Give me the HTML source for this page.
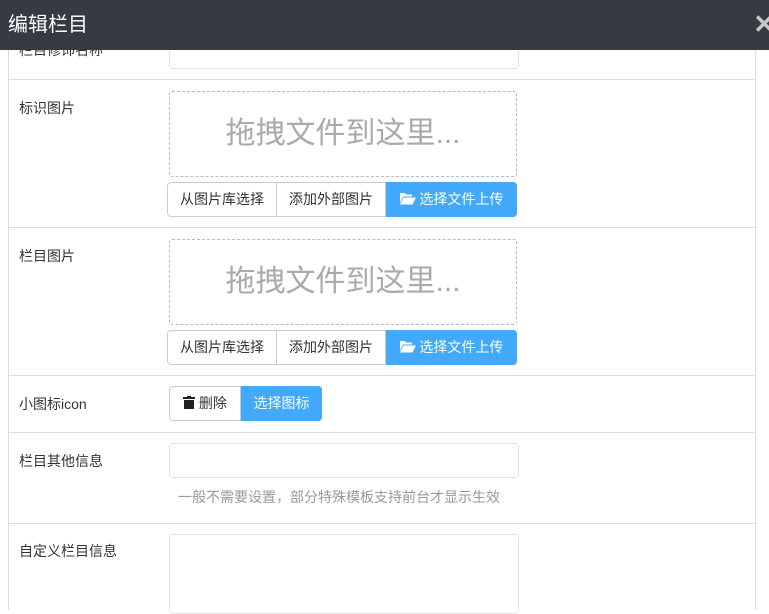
<!DOCTYPE html>
<html><head><meta charset="utf-8"><style>
*{box-sizing:border-box;margin:0;padding:0}
body{width:769px;height:597px;overflow:hidden;background:#fff;font-family:"Liberation Sans","Noto Sans CJK SC",sans-serif;font-size:14px;color:#333;position:relative}
.hd{position:absolute;left:0;top:0;width:769px;height:50px;background:#353a43;color:#fff;font-size:20px;line-height:50px;padding-left:8px}
.x{position:absolute;right:-6px;top:9px;color:#c8c8c8;font-size:26px;font-weight:bold;line-height:30px}
.panel{position:absolute;left:8px;top:50px;width:748px;height:560px;border-left:1px solid #ddd;border-right:1px solid #ddd}
.line{position:absolute;left:8px;width:748px;height:1px;background:#ddd}
.lb{position:absolute;left:19px;font-size:14px;color:#333}
.inp{position:absolute;left:169px;width:350px;border:1px solid #e3e3e3;border-radius:4px;background:#fff}
.dz{position:absolute;left:169px;width:348px;height:86px;border:1px dashed #bbb;border-radius:3px;text-align:center;line-height:84px;font-size:30px;color:#aaa}
.bg{position:absolute;height:35px;display:flex;border-radius:4px;overflow:hidden}
.b{height:35px;line-height:33px;text-align:center;font-size:14px;border:1px solid #ccc;color:#333;background:#fff}
.bp{background:#42a9fc;border-color:#42a9fc;color:#fff}
.hint{position:absolute;left:178px;top:487px;font-size:14px;color:#999}
</style></head><body>
<div class="panel"></div>
<div class="lb" style="top:40px">栏目修饰名称</div>
<div class="inp" style="top:36px;height:33px"></div>
<div class="hd">编辑栏目<span class="x">✕</span></div>
<div class="line" style="top:79px"></div>
<div class="lb" style="top:98px">标识图片</div>
<div class="dz" style="top:91px">拖拽文件到这里...</div>
<div class="bg" style="left:167px;top:182px">
<div class="b" style="width:110px;border-radius:4px 0 0 4px">从图片库选择</div>
<div class="b" style="width:109px;border-left:none">添加外部图片</div>
<div class="b bp" style="width:131px"><svg width="16" height="13" viewBox="0 0 16 13" style="vertical-align:-1px"><path d="M0 1h5l1 1.5h6v2H3L0 11z" fill="#fff"/><path d="M3.5 5.5H16L12.5 12.5H0z" fill="#fff"/></svg> 选择文件上传</div></div>
<div class="line" style="top:227px"></div>
<div class="lb" style="top:246px">栏目图片</div>
<div class="dz" style="top:239px">拖拽文件到这里...</div>
<div class="bg" style="left:167px;top:330px">
<div class="b" style="width:110px;border-radius:4px 0 0 4px">从图片库选择</div>
<div class="b" style="width:109px;border-left:none">添加外部图片</div>
<div class="b bp" style="width:131px"><svg width="16" height="13" viewBox="0 0 16 13" style="vertical-align:-1px"><path d="M0 1h5l1 1.5h6v2H3L0 11z" fill="#fff"/><path d="M3.5 5.5H16L12.5 12.5H0z" fill="#fff"/></svg> 选择文件上传</div></div>
<div class="line" style="top:375px"></div>
<div class="lb" style="top:394px">小图标icon</div>
<div class="bg" style="left:169px;top:386px">
<div class="b" style="width:72px;border-radius:4px 0 0 4px"><svg width="12" height="13" viewBox="0 0 12 13" style="vertical-align:-1px"><rect x="0" y="1" width="12" height="2" fill="#222"/><rect x="4" y="0" width="4" height="2" fill="#222"/><rect x="1" y="4" width="10" height="9" fill="#222"/></svg> 删除</div>
<div class="b bp" style="width:81px">选择图标</div></div>
<div class="line" style="top:432px"></div>
<div class="lb" style="top:451px">栏目其他信息</div>
<div class="inp" style="top:443px;height:35px"></div>
<div class="hint">一般不需要设置，部分特殊模板支持前台才显示生效</div>
<div class="line" style="top:523px"></div>
<div class="lb" style="top:541px">自定义栏目信息</div>
<div class="inp" style="top:534px;height:80px"></div>
</body></html>
